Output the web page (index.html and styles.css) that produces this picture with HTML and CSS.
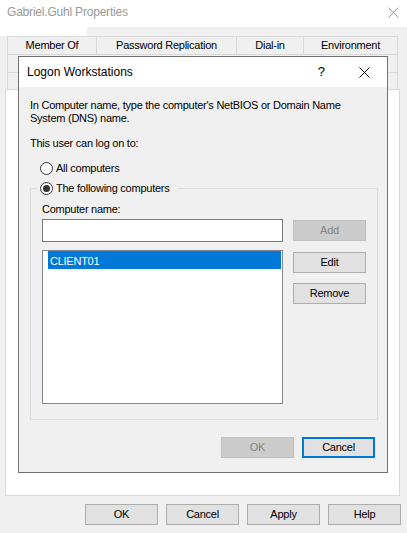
FILE: index.html
```html
<!DOCTYPE html>
<html>
<head>
<meta charset="utf-8">
<title>Gabriel.Guhl Properties</title>
<link rel="stylesheet" href="styles.css">
</head>
<body>
<div class="window">
  <div class="titlebar">
    <span class="title">Gabriel.Guhl Properties</span>
    <svg class="win-close" width="11" height="11" viewBox="0 0 11 11"><path d="M0.5 0.5 L10.5 10.5 M10.5 0.5 L0.5 10.5" stroke="#9a9a9a" stroke-width="1" fill="none"/></svg>
  </div>
  <div class="strip"></div>
  <div class="tabs">
    <div class="tabrow">
      <div class="tab w-member">Member Of</div>
      <div class="tab w-pass">Password Replication</div>
      <div class="tab w-dial">Dial-in</div>
      <div class="tab w-env">Environment</div>
    </div>
    <div class="tabrow">
      <div class="tab w-r2a"></div>
      <div class="tab w-r2b"></div>
      <div class="tab w-r2c"></div>
      <div class="tab w-r2d"></div>
    </div>
    <div class="tabrow r3">
      <div class="tab w-r3a"></div>
      <div class="tab w-r3b"></div>
      <div class="tab w-r3c"></div>
      <div class="tab w-r3d"></div>
    </div>
  </div>
  <div class="panel"></div>
  <div class="btnrow">
    <button class="btn">OK</button>
    <button class="btn">Cancel</button>
    <button class="btn">Apply</button>
    <button class="btn">Help</button>
  </div>
</div>

<div class="dialog">
  <div class="dlg-title">
    <span class="name">Logon Workstations</span>
    <span class="help">?</span>
    <svg class="dlg-close" width="11" height="11" viewBox="0 0 11 11"><path d="M0.5 0.5 L10.5 10.5 M10.5 0.5 L0.5 10.5" stroke="#000" stroke-width="1" fill="none"/></svg>
  </div>
  <div class="dlg-body">
    <p class="intro">In Computer name, type the computer's NetBIOS or Domain Name<br>System (DNS) name.</p>
    <p class="canlog">This user can log on to:</p>
    <div class="radio-row r1"><span class="radio"></span><span>All computers</span></div>
    <fieldset class="group">
      <legend><span class="radio-row"><span class="radio on"></span><span>The following computers</span></span></legend>
      <div class="group-inner">
        <div class="left-col">
          <div class="label">Computer name:</div>
          <div class="input"></div>
          <div class="list">
            <div class="item">CLIENT01</div>
          </div>
        </div>
        <div class="right-col">
          <button class="btn disabled">Add</button>
          <button class="btn edit">Edit</button>
          <button class="btn remove">Remove</button>
        </div>
      </div>
    </fieldset>
    <div class="dlg-buttons">
      <button class="btn disabled">OK</button>
      <button class="btn default">Cancel</button>
    </div>
  </div>
</div>
</body>
</html>
```
FILE: styles.css
```css
* { box-sizing: border-box; }
html, body { margin: 0; padding: 0; }
body {
  width: 407px;
  height: 533px;
  background: #f0f0f0;
  font-family: "Liberation Sans", Arial, sans-serif;
  font-size: 11px;
  line-height: 13px;
  letter-spacing: -0.25px;
  color: #000;
  position: relative;
  overflow: hidden;
}

/* main property sheet */
.titlebar {
  height: 27px;
  background: #fff;
  display: flex;
  justify-content: space-between;
  align-items: flex-start;
  padding: 5px 8px 0 7px;
}
.title {
  font-size: 12px;
  line-height: 14px;
  letter-spacing: -0.2px;
  color: #999;
}
.win-close { margin-top: 2px; display: block; }
.strip { width: 87px; height: 9px; background: #fff; }

.tabs { margin-left: 7px; width: 391px; }
.tabrow { display: flex; height: 18px; }
.tabrow.r3 { height: 17px; }
.tab {
  border-top: 1px solid #d9d9d9;
  border-left: 1px solid #d9d9d9;
  display: flex;
  align-items: center;
  justify-content: center;
  white-space: nowrap;
}
.tab:last-child { border-right: 1px solid #d9d9d9; }
.w-member { width: 89px; }
.w-pass { width: 140px; }
.w-dial { width: 67px; }
.w-env { width: 95px; }
.w-r2a { width: 65px; }
.w-r2b { width: 110px; }
.w-r2c { width: 120px; }
.w-r2d { width: 96px; }
.w-r3a { width: 90px; }
.w-r3b { width: 100px; }
.w-r3c { width: 105px; }
.w-r3d { width: 96px; }

.panel {
  margin-left: 5px;
  width: 395px;
  height: 407px;
  background: #fff;
  border: 1px solid #d9d9d9;
}

.btnrow {
  display: flex;
  justify-content: flex-end;
  gap: 8px;
  padding-right: 6px;
  margin-top: 8px;
}
.btn {
  width: 73px;
  height: 21px;
  background: #e1e1e1;
  border: 1px solid #adadad;
  font: inherit;
  letter-spacing: inherit;
  color: #000;
  padding: 0;
  margin: 0;
  display: flex;
  align-items: center;
  justify-content: center;
}
.btn.disabled { background: #cccccc; border-color: #bfbfbf; color: #838383; }
.btn.default { border: 2px solid #0078d7; }

/* modal dialog */
.dialog {
  position: absolute;
  left: 18px;
  top: 56px;
  width: 370px;
  height: 417px;
  border: 1px solid #707070;
  background: #f0f0f0;
  display: flex;
  flex-direction: column;
}
.dlg-title {
  height: 30px;
  flex: none;
  background: #fff;
  display: flex;
  align-items: center;
  padding: 0 17px 0 8px;
  font-size: 12px;
  line-height: 14px;
  letter-spacing: 0;
}
.dlg-title .name { flex: 1; }
.help { font-size: 13px; margin-right: 34px; }
.dlg-close { display: block; }

.dlg-body {
  padding: 12px 9px 14px 11px;
  display: flex;
  flex-direction: column;
}
.intro { margin: 0; }
.canlog { margin: 12px 0 0; }
.radio-row { display: flex; align-items: center; gap: 3px; height: 13px; }
.r1 { margin: 12px 0 0 10px; }
.radio {
  width: 13px;
  height: 13px;
  border: 1px solid #333;
  border-radius: 50%;
  background: #fff;
  display: flex;
  align-items: center;
  justify-content: center;
  flex: none;
}
.radio.on::after {
  content: "";
  width: 7px;
  height: 7px;
  border-radius: 50%;
  background: #333;
}

fieldset.group {
  margin: 7px 0 0;
  padding: 0;
  border: 1px solid #dcdcdc;
  min-width: 0;
}
fieldset.group legend { margin-left: 6px; padding: 0 9px 0 3px; }
.group-inner { display: flex; gap: 10px; padding: 8px 11px 15px 11px; }
.left-col { width: 241px; display: flex; flex-direction: column; }
.input { height: 23px; margin-top: 3px; border: 1px solid #7a7a7a; background: #fff; }
.list {
  height: 154px;
  margin-top: 8px;
  border: 1px solid #828790;
  background: #fff;
  padding: 0 1px 0 5px;
}
.item {
  height: 18px;
  background: #0078d7;
  color: #fff;
  padding: 3px 0 0 2px;
  line-height: 15px;
}
.right-col { display: flex; flex-direction: column; padding-top: 17px; }
.right-col .edit { margin-top: 11px; }
.right-col .remove { margin-top: 10px; }

.dlg-buttons {
  display: flex;
  justify-content: flex-end;
  gap: 8px;
  margin-top: 17px;
  padding-right: 3px;
}
```
